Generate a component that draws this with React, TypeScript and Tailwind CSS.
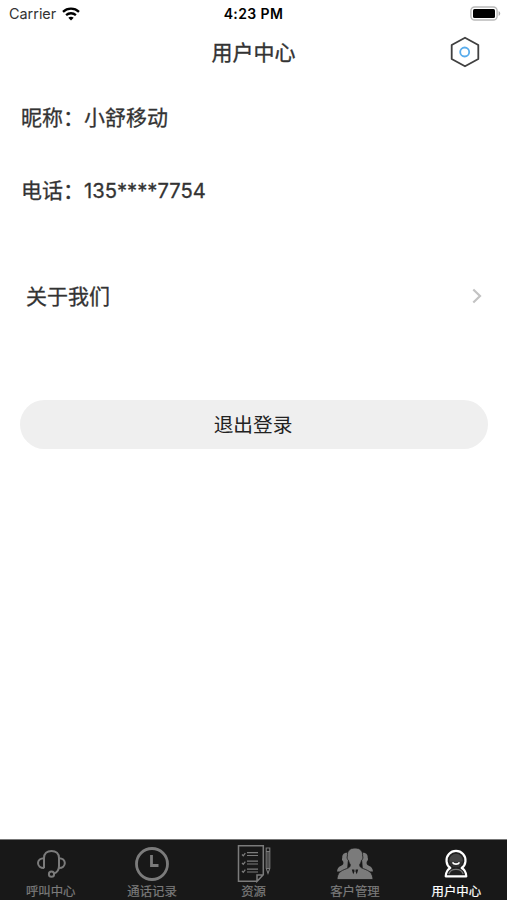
import type { ReactNode } from 'react';

function HeadsetIcon() {
  return (
    <svg width="30" height="30" viewBox="0 0 30 30" fill="none" stroke="currentColor" strokeWidth="2">
      <path d="M8 19.200V9C8 4.600 11 2 15.500 2S23 4.600 23 9v8c0 3.800-1.800 6.500-5.200 7.600" />
      <path d="M8 9.200C4.500 9.200 2 11.200 2 14.100s2.500 4.900 6 4.900M23 9.200c3.500 0 5.800 2 5.800 4.900S26.500 19 23 19" />
      <circle cx="15.500" cy="25.200" r="2.600" />
    </svg>
  );
}

function ClockIcon() {
  return (
    <svg width="36" height="36" viewBox="0 0 36 36" fill="none" stroke="currentColor">
      <circle cx="18" cy="18" r="15.500" strokeWidth="2.800" />
      <path d="M17.500 9v10.500H24.500" strokeWidth="2.800" />
    </svg>
  );
}

function ChecklistIcon() {
  return (
    <svg width="36" height="40" viewBox="0 0 36 40" fill="none" stroke="currentColor" strokeWidth="1.500">
      <path d="M21 37.300H2.500V1.700H27.300V30.800L21 37.300V31H27" />
      <path d="M6 10.500l1.300 1.300 2-2.600M6 19l1.300 1.300 2-2.600M6 27l1.300 1.300 2-2.600" strokeWidth="1.300" />
      <path d="M11 8.700h11M11 11.500h11M11 17.200h11M11 20h11M11 25.200h11M11 28h11" strokeWidth="1.200" />
      <path d="M30.200 4h3.600v20.500L32 29.500l-1.800-5zM30.200 7.500h3.600M30.200 24.500h3.600M32 8v16" strokeWidth="1.100" />
    </svg>
  );
}

function PeopleIcon() {
  return (
    <svg width="38" height="34" viewBox="0 0 38 34" fill="currentColor">
      <path d="M12.500 6C8.500 5 5.800 7.500 6.300 11c-.8.800-.2 2.700 1 3.800.5 2.400-.4 3.200-2.600 4.200C2.500 20 1.300 21.200 1 24.500h10zM25.500 6c4-1 6.700 1.500 6.200 5 .8.800.2 2.700-1 3.800-.5 2.400.4 3.200 2.600 4.200 2.200 1 3.400 2.200 3.700 5.500H27z" />
      <path d="M19 1c-5.200 0-8 3-7.600 8-.8 1-.1 3.600 1.100 4.400.5 2 1 3 1.700 3.900.3 2.300-.5 3.200-4 4.500C4.600 24 1.500 25.500 1 32.500h36c-.5-7-3.600-8.500-9.200-10.700-3.500-1.300-4.300-2.200-4-4.500.7-.9 1.200-1.900 1.700-3.900 1.200-.8 1.900-3.400 1.100-4.400.4-5-2.400-8-7.600-8z" stroke="#181818" strokeWidth=".8" />
      <path d="M15.800 22.500h2.500l.2 2-1.300 2.800zM22.200 22.500h-2.500l-.2 2 1.300 2.800z" fill="#181818" />
    </svg>
  );
}

function UserIcon() {
  return (
    <svg width="26" height="30" viewBox="0 0 26 30" fill="none">
      <path d="M7.300 19A9.500 9.500 0 1 1 18.700 19C21.700 20.500 23 23 23.300 27.300H2.700C3 23 4.300 20.500 7.300 19Z" fill="#202020" stroke="#fff" strokeWidth="2.200" strokeLinejoin="round" />
      <circle cx="13" cy="11.500" r="6.800" fill="#444" />
      <path d="M6.800 12.500c2 .5 3.500.3 6.200.3s4.200.2 6.200-.3c-.4 3.500-2.800 5.600-6.200 5.600s-5.800-2.100-6.200-5.600Z" fill="#303030" />
      <path d="M9.500 13.300c1.400 2.500 5.600 2.500 7 0" stroke="#fff" strokeWidth="1.700" />
      <path d="M5.800 25c1-3.300 3.400-4.700 7.200-4.700s6.200 1.400 7.200 4.700" stroke="#777" strokeWidth="1.200" />
    </svg>
  );
}

function Tab({ label, active = false, children }: { label: string; active?: boolean; children: ReactNode }) {
  return (
    <button className={`flex min-w-0 flex-1 flex-col items-center ${active ? 'text-white' : 'text-[#7b7b7b]'}`}>
      <span className="flex h-11 items-center pt-1">{children}</span>
      <span className="text-[12.400px] leading-4 [-webkit-text-stroke:0.200px_currentColor]">{label}</span>
    </button>
  );
}

export default function App() {
  return (
    <div className="flex h-[900px] w-full flex-col bg-white font-['Inter','Noto_Sans_CJK_SC',sans-serif] text-[#333]">
      <div className="grid h-7 grid-cols-3 items-center text-sm text-black">
        <div className="flex items-center gap-[6px] pl-[9px] text-[#333]">
          <span className="text-[14.400px]">Carrier</span>
          <svg width="18" height="14" viewBox="0 0 18 14" fill="none" stroke="#000" strokeWidth="2.300">
            <path d="M1 4.800c4.500-4.200 11.500-4.200 16 0M4.100 8.100c2.800-2.500 7-2.500 9.800 0" />
            <path d="M9 13.500l-2.700-2.700c1.600-1.400 3.800-1.400 5.400 0z" fill="#000" stroke="none" />
          </svg>
        </div>
        <span className="text-center text-[14px] font-semibold tracking-[0.400px]">4:23 PM</span>
        <svg className="mr-[5px] justify-self-end" width="32" height="16" viewBox="0 0 32 16">
          <rect x=".9" y="1" width="26.200" height="13" rx="3.800" fill="#fff" stroke="#b9b9b9" strokeWidth="1.400" />
          <rect x="3" y="3" width="22" height="9" rx="1.500" fill="#000" />
          <path d="M28.600 5v5c2.200-1.200 2.200-3.800 0-5z" fill="#aaa" />
        </svg>
      </div>

      <header className="grid h-12 grid-cols-3 items-center">
        <span />
        <h1 className="pt-[2px] text-center text-[21px] leading-[30px] [-webkit-text-stroke:0.350px_currentColor]">用户中心</h1>
        <button className="mr-[26px] justify-self-end" aria-label="设置">
          <svg width="32" height="32" viewBox="0 0 32 32" fill="none">
            <path d="M16 1.700L29.300 9v14L16 30.300 2.700 23V9z" stroke="#404040" strokeWidth="1.800" strokeLinejoin="round" />
            <circle cx="15.700" cy="16" r="4.500" stroke="#58acec" strokeWidth="1.800" />
          </svg>
        </button>
      </header>

      <main className="flex flex-1 flex-col px-[21px] text-[21px]">
        <p className="mt-[27px] h-[30px] leading-[30px] [-webkit-text-stroke:0.300px_currentColor]">昵称：小舒移动</p>
        <p className="mt-[43px] h-[30px] leading-[30px] [-webkit-text-stroke:0.300px_currentColor]">电话：<span className="text-[20.200px]">135****7754</span></p>
        <button className="mt-[76px] flex h-[30px] items-center justify-between pr-[4px] pl-[5px] leading-[30px]">
          <span className="[-webkit-text-stroke:0.300px_currentColor]">关于我们</span>
          <svg className="-mt-[2px]" width="10" height="16" viewBox="0 0 10 16" fill="none">
            <path d="M1.300 1.500L8 8l-6.700 6.500" stroke="#c3c3c3" strokeWidth="2.200" />
          </svg>
        </button>
        <button className="-mr-[2px] -ml-px mt-[88px] h-[49px] rounded-full bg-[#efefef] pt-[2px] pr-[2px] text-[19.700px] text-[#222]">退出登录</button>
      </main>

      <nav className="flex h-[61px] border-t border-[#777] bg-[#181818]">
        <Tab label="呼叫中心"><HeadsetIcon /></Tab>
        <Tab label="通话记录"><ClockIcon /></Tab>
        <Tab label="资源"><ChecklistIcon /></Tab>
        <Tab label="客户管理"><PeopleIcon /></Tab>
        <Tab label="用户中心" active><UserIcon /></Tab>
      </nav>
    </div>
  );
}
